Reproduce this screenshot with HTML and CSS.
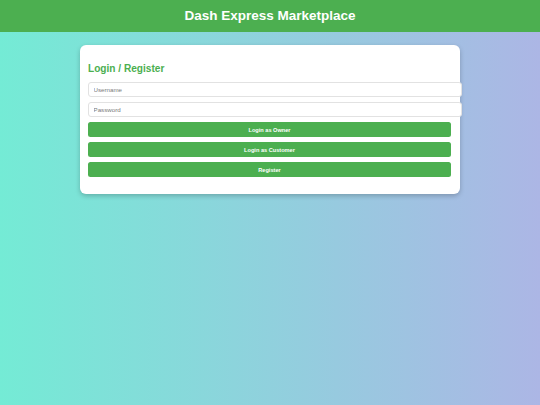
FILE: index.html
```html
<!DOCTYPE html>
<html lang="en">
<head>
<meta charset="utf-8">
<title>Dash Express Marketplace</title>
<link rel="stylesheet" href="styles.css">
</head>
<body>
<header class="topbar">
  <h1 class="topbar-title">Dash Express Marketplace</h1>
</header>
<main class="card">
  <h2 class="card-title">Login / Register</h2>
  <input class="field" type="text" placeholder="Username">
  <input class="field" type="password" placeholder="Password">
  <button class="btn">Login as Owner</button>
  <button class="btn">Login as Customer</button>
  <button class="btn">Register</button>
</main>
</body>
</html>
```
FILE: styles.css
```css
html, body {
  margin: 0;
  padding: 0;
}
body {
  min-height: 405px;
  font-family: "Liberation Sans", Arial, sans-serif;
  background: linear-gradient(to right, #74ebd5, #acb6e5);
}
.topbar {
  background: #4caf50;
  height: 32px;
  display: flex;
  align-items: center;
  justify-content: center;
}
.topbar-title {
  margin: 0;
  color: #fff;
  font-size: 13.5px;
  font-weight: bold;
  line-height: 16px;
}
.card {
  display: block;
  width: 380px;
  box-sizing: border-box;
  margin: 13px auto 0;
  padding: 9px 9px 12px 8px;
  background: #fff;
  border-radius: 6px;
  box-shadow: 0 2px 5px rgba(0, 0, 0, 0.22);
}
.card-title {
  margin: 8.5px 0 7.5px;
  color: #4caf50;
  font-size: 10.125px;
  line-height: 12px;
  font-weight: bold;
}
.field {
  display: block;
  width: 100%;
  height: 13px;
  padding: 0 4px 0 4.5px;
  margin: 0 0 5px;
  border: 1px solid #e2e2e2;
  border-radius: 3px;
  font-family: "Liberation Sans", Arial, sans-serif;
  font-size: 6.2px;
  color: #333;
  background: #fff;
  outline: none;
}
.field::placeholder {
  color: #7a7a7a;
}
.btn {
  display: block;
  width: 100%;
  height: 15px;
  margin: 0 0 5px;
  padding: 0;
  border: none;
  border-radius: 2.5px;
  background: #4caf50;
  color: #fff;
  font-family: "Liberation Sans", Arial, sans-serif;
  font-size: 5.625px;
  font-weight: bold;
  cursor: pointer;
}
```
